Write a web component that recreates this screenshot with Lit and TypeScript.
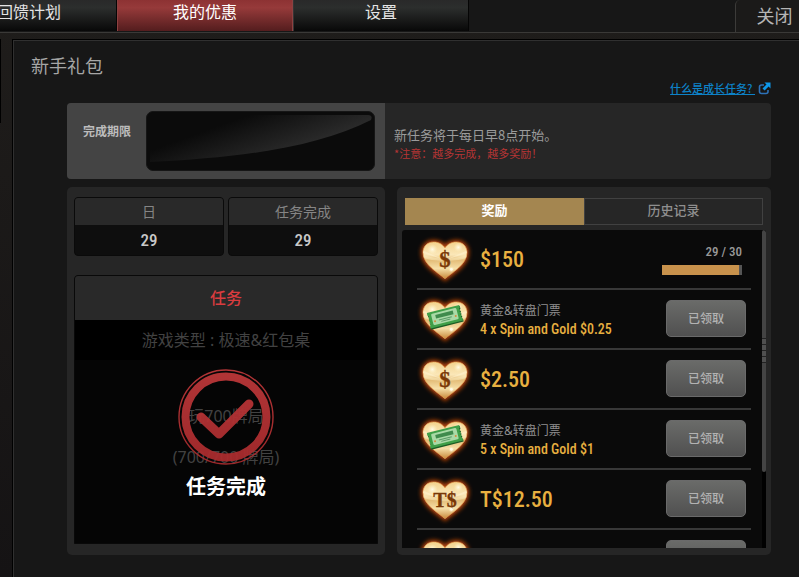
import { LitElement, html, css, svg, nothing } from "lit";
import { customElement, property } from "lit/decorators.js";
import { classMap } from "lit/directives/class-map.js";

type Kind = "cash" | "ticket" | "tcash";

interface Reward {
  kind: Kind;
  value: string;
  caption?: string;
  progress?: { done: number; total: number };
}

const REWARDS: Reward[] = [
  { kind: "cash", value: "$150", progress: { done: 29, total: 30 } },
  { kind: "ticket", caption: "黄金&转盘门票", value: "4 x Spin and Gold $0.25" },
  { kind: "cash", value: "$2.50" },
  { kind: "ticket", caption: "黄金&转盘门票", value: "5 x Spin and Gold $1" },
  { kind: "tcash", value: "T$12.50" },
  { kind: "cash", value: "" },
];

const HEART =
  "M84 146 C66 130 18 104 18 68 C18 48 32 36 50 36 C66 36 78 44 84 54 C90 44 102 36 118 36 C136 36 150 48 150 68 C150 104 102 130 84 146 Z";

const TICKET =
  "M34 56 H134 V64 l-4 4 4 4 -4 4 4 4 -4 4 4 4 -4 4 4 4 V104 H34 V96 l4 -4 -4 -4 4 -4 -4 -4 4 -4 -4 -4 4 -4 -4 -4 Z";

@customElement("heart-icon")
export class HeartIcon extends LitElement {
  @property() kind: Kind = "cash";

  static styles = css`
    :host {
      display: block;
      flex: none;
    }
    .icon {
      display: block;
      width: 56px;
      height: 56px;
    }
    .glyph {
      font-family: "Liberation Serif", serif;
      font-weight: 700;
      text-anchor: middle;
      fill: #7a3806;
      stroke: #7a3806;
      stroke-width: 1;
    }
    .single {
      font-size: 68px;
    }
    .double {
      font-size: 60px;
    }
  `;

  private face() {
    if (this.kind === "ticket") {
      return svg`
        <g transform="rotate(-14 84 81)">
          <path fill="#1b5c25" transform="translate(1 4)" d=${TICKET} />
          <path fill="#3f9f48" d=${TICKET} />
          <rect x="45" y="62" width="78" height="35" rx="4" fill="#a9d9a6" />
          <rect x="57" y="68" width="54" height="11" fill="#3f8a4c" />
          <path d="M64 85 h40 M70 91 h28" stroke="#5b9a68" stroke-width="3" />
          <circle cx="52" cy="86" r="3" fill="#d98a3a" />
          <circle cx="116" cy="86" r="3" fill="#d98a3a" />
        </g>`;
    }
    return this.kind === "cash"
      ? svg`<text class="glyph single" x="84" y="112">$</text>`
      : svg`<text class="glyph double" x="84" y="110">T$</text>`;
  }

  render() {
    return html`<svg class="icon" viewBox="0 0 168 168" aria-hidden="true">
      <defs>
        <linearGradient id="gold" x1="0" y1="0" x2="0" y2="1">
          <stop offset="0" stop-color="#f3d38f" />
          <stop offset="0.35" stop-color="#fbe7b8" />
          <stop offset="0.5" stop-color="#e4bd78" />
          <stop offset="0.72" stop-color="#f6dfa8" />
          <stop offset="1" stop-color="#c8893c" />
        </linearGradient>
        <radialGradient id="shine">
          <stop offset="0" stop-color="#fffbe8" />
          <stop offset="1" stop-color="#fff0c0" stop-opacity="0" />
        </radialGradient>
        <clipPath id="shape"><path d=${HEART} /></clipPath>
        <filter id="glow" x="-20%" y="-20%" width="140%" height="140%"><feGaussianBlur stdDeviation="6" /></filter>
      </defs>
      <path d=${HEART} fill="#b8440a" stroke="#b8440a" stroke-width="12" filter="url(#glow)" />
      <path d=${HEART} fill="url(#gold)" stroke="#e7a355" stroke-width="2" />
      <g clip-path="url(#shape)">
        <path d="M18 76 Q84 96 150 76 L150 84 Q84 104 18 84 Z" fill="#fff2c8" opacity="0.4" />
        <path d="M84 90 L14 60 L14 68 Z M84 90 L154 60 L154 68 Z" fill="#fff4d2" opacity="0.5" />
        <circle cx="46" cy="58" r="16" fill="url(#shine)" />
        <circle cx="124" cy="52" r="14" fill="url(#shine)" />
      </g>
      ${this.face()}
      <circle cx="103" cy="118" r="9" fill="url(#shine)" />
      <circle cx="103" cy="118" r="4" fill="#fffbe8" />
    </svg>`;
  }
}

@customElement("reward-row")
export class RewardRow extends LitElement {
  @property({ attribute: false }) reward!: Reward;

  static styles = css`
    :host {
      display: flex;
      align-items: center;
      box-sizing: border-box;
      height: 60px;
      flex: none;
      border-bottom: 2px solid #383838;
      padding: 0 5px 2px 0;
      gap: 7px;
    }
    .info {
      flex: 1;
      display: flex;
      flex-direction: column;
      padding-top: 4px;
      font-family: "Roboto Condensed", Roboto, sans-serif;
      font-weight: 500;
      color: #e8b040;
      white-space: nowrap;
    }
    .amount {
      font-size: 22px;
      line-height: 24px;
    }
    .caption {
      font: 12px/18px "Noto Sans", "Noto Sans CJK SC", sans-serif;
      color: #8f8f8f;
    }
    .detail {
      font-size: 14px;
      line-height: 18px;
    }
    .claimed {
      width: 80px;
      height: 37px;
      padding: 0 0 1px;
      border: 1px solid #6a6a6a;
      border-radius: 5px;
      background: linear-gradient(#6a6b69, #505050);
      color: #b2b2b2;
      font: 500 12px/16px "Noto Sans CJK SC", sans-serif;
    }
    .progress {
      display: flex;
      flex-direction: column;
      gap: 5px;
      width: 80px;
      margin-right: 4px;
      padding-top: 3px;
      text-align: right;
      font: 500 13px/16px "Roboto Condensed", Roboto, sans-serif;
      color: #999;
    }
    .track {
      height: 10px;
      background: #555;
    }
    .fill {
      height: 100%;
      background: #c8924c;
    }
  `;

  render() {
    const { kind, value, caption, progress } = this.reward;
    return html`
      <heart-icon kind=${kind}></heart-icon>
      <div class="info">
        ${caption ? html`<span class="caption">${caption}</span>` : nothing}
        <span class=${caption ? "detail" : "amount"}>${value}</span>
      </div>
      ${progress
        ? html`<div class="progress">
            <span>${progress.done} / ${progress.total}</span>
            <div class="track">
              <div class="fill" style="width:${(progress.done / progress.total) * 100}%"></div>
            </div>
          </div>`
        : html`<button class="claimed" type="button">已领取</button>`}
    `;
  }
}

@customElement("app-root")
export class AppRoot extends LitElement {
  static styles = css`
    :host {
      display: flex;
      flex-direction: column;
      height: 100vh;
      min-height: 560px;
      overflow: hidden;
      background: linear-gradient(#1f1d1b, #151314);
      font-family: "Noto Sans CJK SC", sans-serif;
      color: #9b9b9b;
    }
    * {
      box-sizing: border-box;
    }
    button {
      font-family: inherit;
      padding: 0;
      border: 0;
    }
    .topbar {
      display: flex;
      flex: none;
      height: 33px;
      background: #171717;
      border-bottom: 1px solid #3a3937;
    }
    .nav {
      display: flex;
      flex: 1;
      margin-left: -59px;
      padding-bottom: 1px;
    }
    .nav-tab {
      width: 176px;
      padding-bottom: 10px;
      background: linear-gradient(#292929, #2c2e2d 25%, #080808);
      border-right: 1px solid #050505;
      border-left: 1px solid #353535;
      color: #e4e4e4;
      font-size: 16px;
      line-height: 20px;
    }
    .nav-tab.active {
      background: linear-gradient(#8d3233, #963a3a 25%, #541d1e);
      border-color: #8d4141;
      color: #fff;
    }
    .close {
      width: 64px;
      padding: 0 0 3px 14px;
      background: #1b1a19;
      border-left: 1px solid #3c3b39;
      border-top-left-radius: 5px;
      color: #b5b5b5;
      font-size: 18px;
      line-height: 24px;
    }
    .frame {
      display: flex;
      flex: 1;
      min-height: 0;
      padding-top: 6px;
    }
    .gutter {
      flex: none;
      width: 12px;
    }
    .edge {
      width: 1px;
      height: 84px;
      background: #000;
    }
    .page {
      display: flex;
      flex-direction: column;
      flex: 1;
      min-width: 0;
      padding: 10px 28px 22px 18px;
      background: #171717;
      border-top: 1px solid #000;
      border-left: 1px solid #000;
      box-shadow: inset 1px 1px #303030;
    }
    .title {
      margin: 0;
      font-size: 18px;
      font-weight: 400;
      line-height: 30px;
      color: #a6a6a6;
    }
    .help {
      display: flex;
      align-self: flex-end;
      align-items: center;
      gap: 3px;
      height: 16px;
      margin-bottom: 7px;
      color: #0d82c8;
      font-size: 11px;
      font-weight: 500;
      line-height: 16px;
      text-decoration: none;
    }
    .help-text {
      text-decoration: underline;
    }
    .help-icon {
      width: 13px;
      height: 13px;
    }
    .columns {
      display: grid;
      grid-template-columns: 318fr 374fr;
      gap: 12px;
      flex: 1;
      min-height: 0;
      margin-left: 36px;
    }
    .notice {
      display: grid;
      grid-template-columns: 318fr 386fr;
      flex: none;
      height: 76px;
      margin: 0 0 8px 36px;
      background: #262626;
      border-radius: 4px;
      overflow: hidden;
    }
    .deadline {
      display: flex;
      gap: 15px;
      min-width: 0;
      padding: 8px 10px 8px 16px;
      background: #444;
    }
    .deadline-label {
      flex: none;
      padding-top: 12px;
      font-size: 12px;
      font-weight: 700;
      line-height: 16px;
      color: #bcbcbc;
    }
    .screen {
      flex: 1;
      min-width: 0;
      background: #0b0b0b;
      border: 1px solid #161616;
      border-radius: 7px;
      overflow: hidden;
    }
    .gloss {
      display: block;
      width: 100%;
      height: 100%;
    }
    .message {
      padding: 22px 0 0 9px;
      font-size: 13px;
      line-height: 20px;
    }
    .message p {
      margin: 0;
    }
    .message .warn {
      font-size: 11px;
      line-height: 16px;
      color: #b63535;
    }
    .card {
      display: flex;
      flex-direction: column;
      min-width: 0;
      min-height: 0;
      background: #262626;
      border-radius: 5px;
    }
    .card.left {
      gap: 19px;
      padding: 10px 7px 11px;
    }
    .card.right {
      gap: 5px;
      padding: 11px 5px 7px;
    }
    .stats {
      display: flex;
      gap: 4px;
    }
    .stat {
      flex: 1;
      border: 1px solid #0a0a0a;
      border-radius: 4px;
      overflow: hidden;
      background: #0e0e0e;
      text-align: center;
    }
    .stat-name {
      background: #292929;
      font-size: 14px;
      line-height: 27px;
      color: #858585;
    }
    .stat-value {
      font: 500 17px/30px "Roboto Condensed", Roboto, sans-serif;
      color: #c8c8c8;
    }
    .task {
      position: relative;
      display: flex;
      flex-direction: column;
      flex: 1;
      border: 1px solid #090909;
      border-radius: 4px 4px 0 0;
      overflow: hidden;
      background: #050505;
      text-align: center;
      font-family: "Noto Sans", "Noto Sans CJK SC", sans-serif;
      font-size: 16px;
      color: #424242;
    }
    .task-head {
      margin: 0;
      background: #292929;
      font-size: 16px;
      font-weight: 500;
      line-height: 44px;
      color: #d93c3f;
    }
    .task-type {
      margin: 0;
      background: #000;
      line-height: 40px;
    }
    .task-goal {
      margin: 0;
      padding-top: 36px;
      line-height: 41px;
    }
    .done {
      position: absolute;
      inset: 93px 0 0;
      display: flex;
      flex-direction: column;
      align-items: center;
      gap: 6px;
      color: #fff;
      font-size: 20px;
      font-weight: 700;
      line-height: 32px;
    }
    .stamp {
      width: 96px;
      height: 96px;
      opacity: 0.94;
    }
    .tabs {
      display: flex;
      flex: none;
      height: 27px;
      margin: 0 3px;
    }
    .tab {
      flex: 1;
      background: #262626;
      border: 1px solid #414141;
      color: #8f8f8f;
      font-size: 13px;
      font-weight: 500;
      line-height: 20px;
      padding-bottom: 3px;
    }
    .tab.active {
      background: #a48650;
      border-color: #a48650;
      color: #fff;
      font-weight: 700;
    }
    .viewport {
      display: flex;
      flex: 1;
      min-height: 0;
      overflow: hidden;
      border-radius: 3px 3px 0 0;
      background: #0a0a0a;
    }
    .rewards {
      display: flex;
      flex-direction: column;
      flex: 1;
      padding: 0 11px 0 15px;
    }
    .rail {
      width: 4px;
      background: #000;
    }
    .thumb {
      display: flex;
      flex-direction: column;
      justify-content: center;
      height: 76%;
      border-radius: 2px;
      background: #444;
    }
    .grip {
      height: 25px;
      background: repeating-linear-gradient(#222 0 1px, #505050 1px 6px);
    }
  `;

  private navTab(label: string, active = false) {
    return html`<button type="button" class=${classMap({ "nav-tab": true, active })}>${label}</button>`;
  }

  render() {
    return html`
      <header class="topbar">
        <nav class="nav">${this.navTab("回馈计划")}${this.navTab("我的优惠", true)}${this.navTab("设置")}</nav>
        <button type="button" class="close">关闭</button>
      </header>
      <div class="frame">
        <div class="gutter"><div class="edge"></div></div>
        <main class="page">
          <h1 class="title">新手礼包</h1>
          <a class="help" href="#help">
            <span class="help-text">什么是成长任务?&nbsp;</span>
            <svg class="help-icon" viewBox="0 0 13 13" aria-hidden="true">
              <path d="M6 3 H3.5 Q1.5 3 1.5 5 V9.5 Q1.5 11.5 3.5 11.5 H8 Q10 11.5 10 9.5 V8" fill="none" stroke="#2d72b8" stroke-width="1.6" />
              <path d="M6.5 0.5 H12.5 V6.5 L10.6 4.6 L6.6 8.6 L4.5 6.5 L8.5 2.5 Z" fill="#0e98ea" />
            </svg>
          </a>
          <section class="notice">
            <div class="deadline">
              <span class="deadline-label">完成期限</span>
              <div class="screen">
                <svg class="gloss" viewBox="0 0 228 58" preserveAspectRatio="none" aria-hidden="true">
                  <defs>
                    <linearGradient id="sheen" gradientUnits="userSpaceOnUse" x1="95" y1="0" x2="113" y2="50">
                      <stop offset="0.1" stop-color="#0b0b0b" />
                      <stop offset="1" stop-color="#2a2a2a" />
                    </linearGradient>
                  </defs>
                  <path d="M3 3 H222 Q227 3 225 8 C170 36 90 46 3 50 Z" fill="url(#sheen)" />
                </svg>
              </div>
            </div>
            <div class="message">
              <p>新任务将于每日早8点开始。</p>
              <p class="warn">*注意：越多完成，越多奖励！</p>
            </div>
          </section>
          <div class="columns">
            <section class="card left">
              <div class="stats">
                <div class="stat">
                  <div class="stat-name">日</div>
                  <div class="stat-value">29</div>
                </div>
                <div class="stat">
                  <div class="stat-name">任务完成</div>
                  <div class="stat-value">29</div>
                </div>
              </div>
              <div class="task">
                <h2 class="task-head">任务</h2>
                <p class="task-type">游戏类型 : 极速&amp;红包桌</p>
                <p class="task-goal">玩700牌局<br />(700/700 牌局)</p>
                <div class="done">
                  <svg class="stamp" viewBox="0 0 96 96" aria-hidden="true">
                    <defs>
                      <linearGradient id="red" gradientUnits="userSpaceOnUse" x1="0" y1="0" x2="0" y2="96">
                        <stop offset="0" stop-color="#bd383a" />
                        <stop offset="1" stop-color="#a82b2d" />
                      </linearGradient>
                    </defs>
                    <g fill="none" stroke="url(#red)">
                      <circle cx="48" cy="48" r="47" stroke-width="1.4" />
                      <circle cx="48" cy="48" r="40.5" stroke-width="8" />
                      <path d="M23 48 L41 65 L71 35" stroke-width="9" stroke-linecap="round" stroke-linejoin="round" />
                    </g>
                  </svg>
                  <span>任务完成</span>
                </div>
              </div>
            </section>
            <section class="card right">
              <div class="tabs">
                <button type="button" class="tab active">奖励</button>
                <button type="button" class="tab">历史记录</button>
              </div>
              <div class="viewport">
                <div class="rewards">${REWARDS.map((r) => html`<reward-row .reward=${r}></reward-row>`)}</div>
                <div class="rail"><div class="thumb"><div class="grip"></div></div></div>
              </div>
            </section>
          </div>
        </main>
      </div>
    `;
  }
}
